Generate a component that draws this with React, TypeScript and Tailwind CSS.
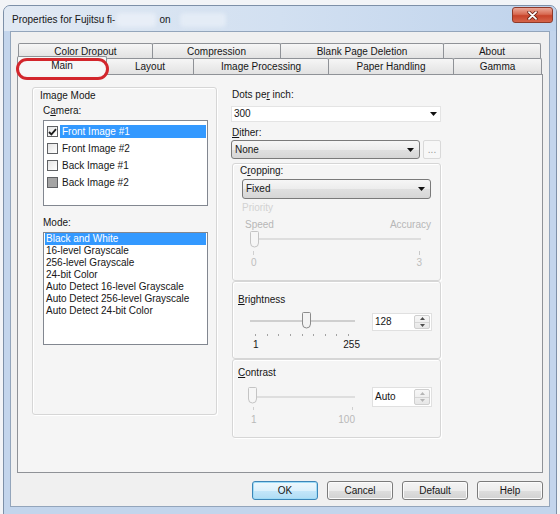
import React from "react";

const FONT: React.CSSProperties = {
  fontFamily: '"Liberation Sans", Arial, "DejaVu Sans", sans-serif',
};

const backTabs = [
  { label: "Color Dropout", w: "w-[135px]" },
  { label: "Compression", w: "w-[129px]" },
  { label: "Blank Page Deletion", w: "w-[164px]" },
  { label: "About", w: "w-[98px]" },
];

const frontTabs = [
  { label: "Layout", w: "w-[88px]" },
  { label: "Image Processing", w: "w-[136px]" },
  { label: "Paper Handling", w: "w-[126px]" },
  { label: "Gamma", w: "w-[89px]" },
];

const cameras: { label: string; state: "on" | "off" | "mixed"; selected?: boolean }[] = [
  { label: "Front Image #1", state: "on", selected: true },
  { label: "Front Image #2", state: "off" },
  { label: "Back Image #1", state: "off" },
  { label: "Back Image #2", state: "mixed" },
];

const modes = [
  "Black and White",
  "16-level Grayscale",
  "256-level Grayscale",
  "24-bit Color",
  "Auto Detect 16-level Grayscale",
  "Auto Detect 256-level Grayscale",
  "Auto Detect 24-bit Color",
];

function DownArrow({ color = "#111" }: { color?: string }) {
  return (
    <svg width="7" height="4" viewBox="0 0 7 4">
      <path d="M0 0h7L3.5 4z" fill={color} />
    </svg>
  );
}

function UpArrow({ color = "#111" }: { color?: string }) {
  return (
    <svg width="5" height="3" viewBox="0 0 5 3">
      <path d="M0 3h5L2.5 0z" fill={color} />
    </svg>
  );
}

function SmallDown({ color = "#111" }: { color?: string }) {
  return (
    <svg width="5" height="3" viewBox="0 0 5 3">
      <path d="M0 0h5L2.5 3z" fill={color} />
    </svg>
  );
}

function CheckBox({ state }: { state: "on" | "off" | "mixed" }) {
  return (
    <span className="flex h-[11px] w-[11px] shrink-0 items-center justify-center border border-[#5f6164] bg-gradient-to-br from-[#e4e4e4] to-[#ffffff]">
      {state === "on" && (
        <svg width="9" height="8" viewBox="0 0 9 8">
          <path d="M1 4l2.4 2.4L8 1.2" stroke="#1c1c1c" strokeWidth="1.8" fill="none" />
        </svg>
      )}
      {state === "mixed" && <span className="h-[9px] w-[9px] bg-[#a4a4a4]" />}
    </span>
  );
}

function Thumb({ disabled }: { disabled?: boolean }) {
  const stroke = disabled ? "#c4c4c4" : "#8b8b8b";
  const fill = disabled ? "#f6f6f6" : "#f3f3f3";
  return (
    <svg width="9" height="17" viewBox="0 0 9 17">
      <path
        d="M1.5 .5h6a1 1 0 0 1 1 1v10.5a4 4 0 0 1-8 0V1.5a1 1 0 0 1 1-1z"
        fill={fill}
        stroke={stroke}
      />
    </svg>
  );
}

function Slider({
  thumbLeft,
  disabled,
  trackClass,
  thumbTop,
}: {
  thumbLeft: number;
  disabled?: boolean;
  trackClass: string;
  thumbTop: number;
}) {
  return (
    <div className="relative flex h-full w-full items-center">
      <div className={`h-[2px] ${trackClass} ${disabled ? "bg-[#dedede]" : "bg-[#cfcfcf]"}`} />
      <div className="absolute" style={{ left: thumbLeft, top: thumbTop }}>
        <Thumb disabled={disabled} />
      </div>
    </div>
  );
}

function Combo({ text, className }: { text: string; className: string }) {
  return (
    <div
      className={`flex items-center justify-between rounded-[3px] border border-[#7a7a7a] bg-[linear-gradient(#f6f6f6,#ececec_50%,#e0e0e0_50%,#d6d6d6)] pl-[3px] pr-[5px] ${className}`}
    >
      <span>{text}</span>
      <DownArrow />
    </div>
  );
}

function Spin({ value, disabled }: { value: string; disabled?: boolean }) {
  const arrow = disabled ? "#b5b5b5" : "#4d4d4d";
  return (
    <div className="flex h-full w-full border border-[#e0e0e0] bg-white">
      <span className="flex flex-1 items-center pl-[2px]">{value}</span>
      <div className="my-[1px] mr-[1px] flex w-[16px] flex-col rounded-[2px] border border-[#cfcfcf] bg-gradient-to-b from-[#f7f7f7] to-[#e7e7e7]">
        <div className="flex flex-1 items-center justify-center border-b border-[#d6d6d6]">
          <UpArrow color={arrow} />
        </div>
        <div className="flex flex-1 items-center justify-center">
          <SmallDown color={arrow} />
        </div>
      </div>
    </div>
  );
}

function Button({ label, primary }: { label: string; primary?: boolean }) {
  return (
    <div
      className={
        primary
          ? "flex h-[19px] w-[66px] items-center justify-center rounded-[3px] border border-[#3c86b8] bg-[linear-gradient(#eef8fd,#dcf1fc_50%,#c4e7fa_50%,#b0dcf4)] shadow-[inset_0_0_0_1px_#9fdcf7]"
          : "flex h-[19px] w-[66px] items-center justify-center rounded-[3px] border border-[#7b7b7b] bg-[linear-gradient(#f4f4f4,#ececec_50%,#dedede_50%,#d2d2d2)] shadow-[inset_0_0_0_1px_#fbfbfb]"
      }
    >
      {label}
    </div>
  );
}

const groupBox =
  "rounded-[3px] border border-[#d6d6d6] shadow-[inset_1px_1px_0_#ffffff,1px_1px_0_#ffffff]";

export default function App() {
  return (
    <div
      className="relative h-[514px] w-[560px] overflow-hidden bg-[#f2f4f7] pl-[3px] pt-[5px] text-[10px] leading-[12px] text-[#161616]"
      style={FONT}
    >
      <div className="flex h-[522px] w-[554px] flex-col rounded-t-[7px] border border-[#7d90a8] bg-[#c3d5ec]">
        {/* caption bar */}
        <div className="flex h-[25px] items-start rounded-t-[6px] bg-gradient-to-r from-[#e1e9f3] via-[#d2e0f1] to-[#bfd3ec] pl-[8px]">
          <span className="mt-[8px] whitespace-nowrap">Properties for Fujitsu fi-</span>
          <span className="ml-[1px] mt-[7px] h-[14px] w-[40px] rounded-[4px] bg-[#e8eef7] blur-[2px]" />
          <span className="ml-[3px] mt-[8px]">on</span>
          <span className="ml-[9px] mt-[7px] h-[14px] w-[46px] rounded-[4px] bg-[#e4ecf6] blur-[2px]" />
          <div className="ml-auto mr-[3px] mt-[1px] flex h-[16px] w-[41px] items-center justify-center rounded-[3px] border border-[#8e3a2a] bg-[linear-gradient(#eba898,#d86a52_45%,#c8432a_55%,#d5644a)]">
            <svg width="11" height="9" viewBox="0 0 11 9">
              <path d="M2 1.2l7 6.6M9 1.2l-7 6.6" stroke="#6b2418" strokeWidth="3.4" strokeLinecap="round" />
              <path d="M2 1.2l7 6.6M9 1.2l-7 6.6" stroke="#ffffff" strokeWidth="1.8" strokeLinecap="round" />
            </svg>
          </div>
        </div>

        {/* client area */}
        <div className="mx-[6px] flex h-[476px] flex-col border border-[#93a5bb] bg-[#f0f0f0]">
          <div className="ml-[6px] mt-[11px] w-[526px]">
            {/* back tab row */}
            <div className="flex h-[15px] pl-[1px]">
              {backTabs.map((t, i) => (
                <div
                  key={t.label}
                  className={`${t.w} ${i > 0 ? "-ml-px" : ""} flex items-center justify-center rounded-t-[2px] border border-b-0 border-[#8f9297] bg-gradient-to-b from-[#f6f6f6] to-[#e2e2e2] pt-[1px]`}
                >
                  {t.label}
                </div>
              ))}
            </div>
            {/* front tab row */}
            <div className="flex h-[16px]">
              <div className="relative z-10 -mt-[2px] flex h-[19px] w-[90px] items-center justify-center rounded-t-[2px] border border-b-0 border-[#8f9297] bg-[#f7f7f7] pb-[1px]">
                Main
                <span className="pointer-events-none absolute left-[-2px] top-[1px] h-[22px] w-[93px] rounded-[11px] border-[3px] border-[#d3262c]" />
              </div>
              {frontTabs.map((t) => (
                <div
                  key={t.label}
                  className={`${t.w} -ml-px flex items-center justify-center rounded-t-[2px] border border-b-0 border-[#8f9297] bg-gradient-to-b from-[#f6f6f6] to-[#e2e2e2] pt-[1px]`}
                >
                  {t.label}
                </div>
              ))}
            </div>

            {/* tab page */}
            <div className="flex h-[399px] w-[526px] border border-[#8f9297] bg-[#f5f5f5] pl-[14px]">
              {/* Image Mode group */}
              <div className={`mt-[12px] flex h-[328px] w-[185px] flex-col pl-[7px] pt-[2px] ${groupBox}`}>
                <span>Image Mode</span>
                <span className="ml-[3px] mt-[3px]">
                  C<span className="underline">a</span>mera:
                </span>
                <div className="ml-[3px] mt-[3px] h-[86px] w-[165px] border border-[#828790] bg-white pt-[2px]">
                  {cameras.map((c) => (
                    <div key={c.label} className="flex h-[17px] items-center pl-[3px]">
                      <CheckBox state={c.state} />
                      <span
                        className={`ml-[2px] mr-[1px] flex h-[13px] flex-1 items-center px-[2px] ${
                          c.selected ? "bg-[#3399ff] text-white" : ""
                        }`}
                      >
                        {c.label}
                      </span>
                    </div>
                  ))}
                </div>
                <span className="ml-[3px] mt-[11px]">Mode:</span>
                <div className="ml-[3px] mt-[3px] h-[113px] w-[165px] border border-[#828790] bg-white">
                  {modes.map((m, i) => (
                    <div
                      key={m}
                      className={`mx-[1px] h-[12px] whitespace-nowrap pl-[1px] ${
                        i === 0 ? "bg-[#3399ff] text-white" : ""
                      }`}
                    >
                      {m}
                    </div>
                  ))}
                </div>
              </div>

              {/* right column */}
              <div className="ml-[14px] mt-[14px] flex w-[210px] flex-col">
                <span className="ml-[1px]">
                  Dots pe<span className="underline">r</span> inch:
                </span>
                <div className="mt-[5px] flex h-[16px] items-center justify-between border border-[#e4e4e4] bg-white pl-[2px] pr-[3px]">
                  <span>300</span>
                  <DownArrow />
                </div>
                <span className="ml-[1px] mt-[5px]">
                  <span className="underline">D</span>ither:
                </span>
                <div className="mt-[1px] flex">
                  <Combo text="None" className="h-[19px] w-[189px]" />
                  <div className="ml-[3px] flex h-[19px] w-[18px] items-end justify-center rounded-[2px] border border-[#d9d9d9] bg-[#f7f7f7] pb-[2px] text-[#9a9a9a]">
                    ...
                  </div>
                </div>

                {/* Cropping group */}
                <div className={`ml-[1px] mt-[4px] flex h-[118px] w-[209px] flex-col ${groupBox}`}>
                  <span className="ml-[7px] mt-[1px]">
                    C<span className="underline">r</span>opping:
                  </span>
                  <Combo text="Fixed" className="ml-[9px] mt-[2px] h-[20px] w-[189px]" />
                  <span className="ml-[9px] mt-[3px] text-[#d2d2d2]">Priority</span>
                  <div className="ml-[12px] mr-[9px] mt-[5px] flex justify-between text-[#b7b7b7]">
                    <span>Speed</span>
                    <span>Accuracy</span>
                  </div>
                  <div className="ml-[15px] h-[16px] w-[177px]">
                    <Slider thumbLeft={2} thumbTop={0} disabled trackClass="ml-[5px] mr-[4px] flex-1" />
                  </div>
                  <div className="ml-[20px] mt-[4px] flex h-[4px] w-[167px] justify-between">
                    <span className="w-px bg-[#d0d0d0]" />
                    <span className="w-px bg-[#c8c8c8]" />
                  </div>
                  <div className="ml-[18px] mt-[2px] flex w-[171px] justify-between text-[#bdbdbd]">
                    <span>0</span>
                    <span>3</span>
                  </div>
                </div>

                {/* Brightness group */}
                <div className={`ml-[1px] flex h-[78px] w-[209px] flex-col ${groupBox}`}>
                  <span className="ml-[5px] mt-[12px]">
                    <span className="underline">B</span>rightness
                  </span>
                  <div className="mt-[5px] flex h-[20px]">
                    <div className="ml-[15px] h-[20px] w-[110px]">
                      <Slider thumbLeft={54} thumbTop={1} trackClass="ml-[2px] mr-[3px] flex-1" />
                    </div>
                    <div className="ml-[14px] mt-[2px] h-[18px] w-[60px]">
                      <Spin value="128" />
                    </div>
                  </div>
                  <div className="ml-[22px] mt-[3px] flex h-[2px] w-[94px] justify-between">
                    {Array.from({ length: 9 }).map((_, i) => (
                      <span key={i} className="w-px bg-[#a3a3a3]" />
                    ))}
                  </div>
                  <div className="ml-[20px] mt-[3px] flex w-[107px] justify-between">
                    <span>1</span>
                    <span>255</span>
                  </div>
                </div>

                {/* Contrast group */}
                <div className={`ml-[1px] flex h-[79px] w-[209px] flex-col ${groupBox}`}>
                  <span className="ml-[5px] mt-[7px]">
                    <span className="underline">C</span>ontrast
                  </span>
                  <div className="mt-[7px] flex h-[21px]">
                    <div className="ml-[15px] h-[21px] w-[110px]">
                      <Slider thumbLeft={0} thumbTop={1} disabled trackClass="ml-[4px] mr-[3px] flex-1" />
                    </div>
                    <div className="ml-[14px] mt-[1px] h-[20px] w-[60px]">
                      <Spin value="Auto" disabled />
                    </div>
                  </div>
                  <div className="ml-[20px] flex h-[3px] w-[100px] justify-between">
                    <span className="w-px bg-[#cfcfcf]" />
                    <span className="w-px bg-[#cfcfcf]" />
                  </div>
                  <div className="ml-[18px] mt-[4px] flex w-[104px] justify-between text-[#b9b9b9]">
                    <span>1</span>
                    <span>100</span>
                  </div>
                </div>
              </div>
            </div>
          </div>

          {/* dialog buttons */}
          <div className="mt-[8px] flex justify-end gap-[9px] pr-[6px]">
            <Button label="OK" primary />
            <Button label="Cancel" />
            <Button label="Default" />
            <Button label="Help" />
          </div>
        </div>
      </div>
    </div>
  );
}
